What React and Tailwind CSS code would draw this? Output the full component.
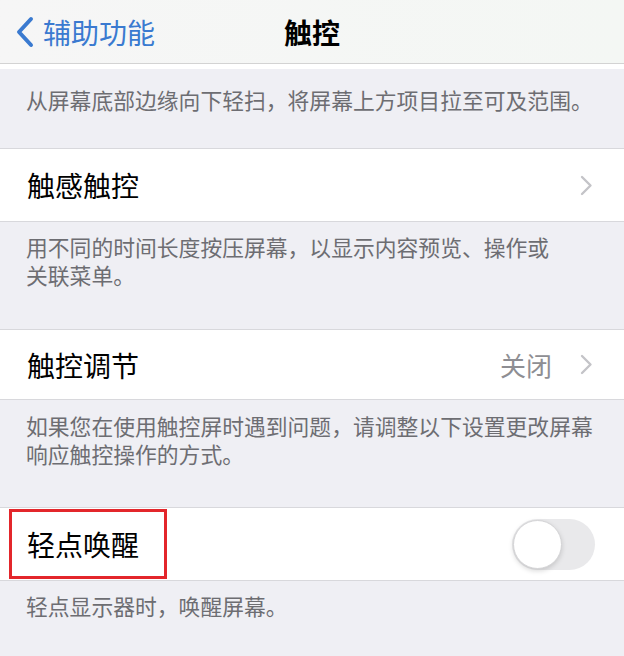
const font = { fontFamily: '"Noto Sans CJK SC", "Noto Sans", sans-serif' };

const Chevron = () => (
  <svg width="13" height="21" viewBox="0 0 13 21" fill="none" className="shrink-0">
    <path d="M2 2 L10.5 10.5 L2 19" stroke="#c4c4c8" strokeWidth="2.4" strokeLinecap="round" strokeLinejoin="round" />
  </svg>
);

const BackChevron = () => (
  <svg width="20" height="32" viewBox="0 0 20 32" fill="none" className="shrink-0">
    <path d="M16 3 L4 16 L16 29" stroke="#3a7ad0" strokeWidth="4" strokeLinecap="round" strokeLinejoin="round" />
  </svg>
);

const Note = ({ children, className = '' }) => (
  <div className={`px-[26px] text-[21.8px] leading-[28px] text-[#6d6d72] whitespace-nowrap ${className}`}>
    {children}
  </div>
);

const Row = ({ label, h, value, chevron, toggle, boxed }) => (
  <div className={`relative bg-white border-y border-[#d8d8dc] flex items-center pl-[27px] pr-[31px] ${h}`}>
    <span className="text-[28px] text-black flex-1">{label}</span>
    {value && <span className="text-[26px] text-[#8e8e93] mr-[28px]">{value}</span>}
    {chevron && <Chevron />}
    {toggle && (
      <div className="w-[83px] h-[51px] rounded-full bg-[#e9e9eb] p-[1px] flex items-center -mr-[2px]">
        <div className="w-[49px] h-[49px] rounded-full bg-white border border-[#d4d4d6] shadow-[0_2px_5px_rgba(0,0,0,0.15)]" />
      </div>
    )}
    {boxed && (
      <div className="absolute left-[9px] top-[1px] w-[158px] h-[70px] border-[3px] border-[#e3262b]" />
    )}
  </div>
);

export default function App() {
  return (
    <div className="w-[624px] h-[656px] overflow-hidden bg-[#efeff4]" style={font}>
      <div className="h-[64px] bg-gradient-to-r from-[#f6f6f6] to-[#f4f7f4] border-b border-[#d3d3d3] flex items-center relative">
        <div className="flex items-center gap-[8px] pl-[15px] text-[#3a7ad0] relative z-10">
          <BackChevron />
          <span className="text-[28px] leading-none">辅助功能</span>
        </div>
        <div className="absolute inset-x-0 top-0 h-full flex items-center justify-center">
          <span className="text-[28px] font-semibold text-black">触控</span>
        </div>
      </div>
      <div className="h-[5px] bg-white" />
      <Note className="pt-[17px] pb-[34px]">从屏幕底部边缘向下轻扫，将屏幕上方项目拉至可及范围。</Note>
      <Row label="触感触控" h="h-[74px]" chevron />
      <Note className="pt-[11px] pb-[40px]">
        用不同的时间长度按压屏幕，以显示内容预览、操作或<br />关联菜单。
      </Note>
      <Row label="触控调节" h="h-[71px]" value="关闭" chevron />
      <Note className="pt-[12px] pb-[39px]">
        如果您在使用触控屏时遇到问题，请调整以下设置更改屏幕<br />响应触控操作的方式。
      </Note>
      <Row label="轻点唤醒" h="h-[74px]" toggle boxed />
      <Note className="pt-[11px]">轻点显示器时，唤醒屏幕。</Note>
    </div>
  );
}
